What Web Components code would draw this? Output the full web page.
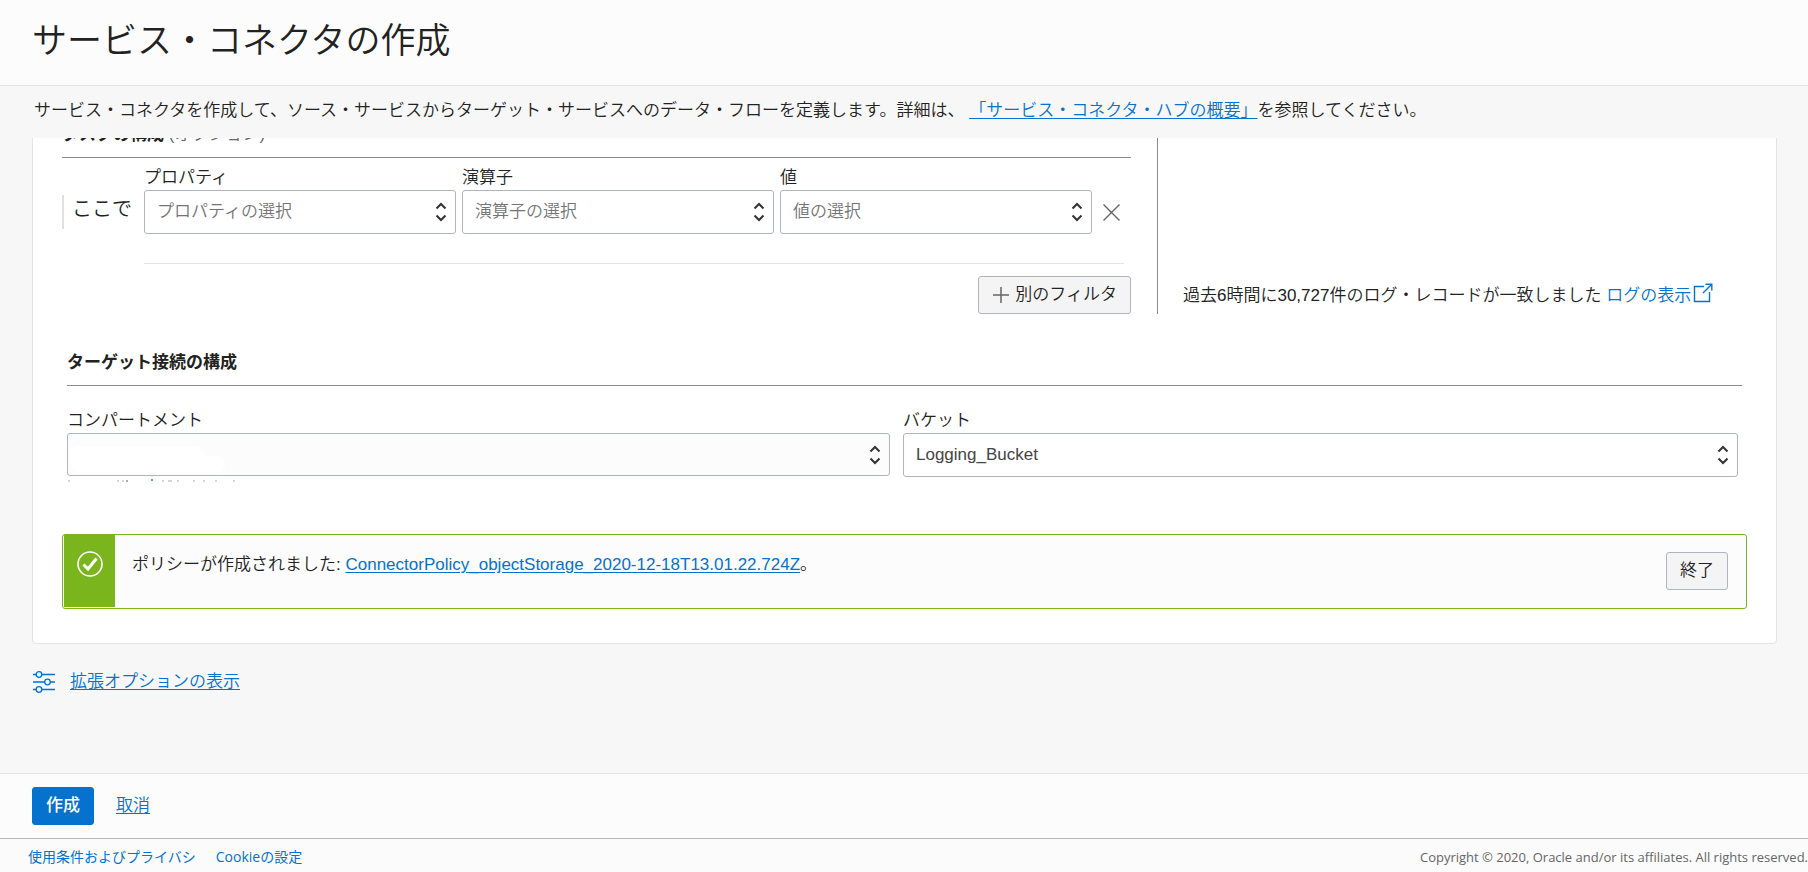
<!DOCTYPE html>
<html lang="ja">
<head>
<meta charset="utf-8">
<title>サービス・コネクタの作成</title>
<style>
  html, body { margin: 0; height: 100%; }
  body {
    --line: #e3e3e3;
    --line-dark: #8c8c8c;
    --field: #b0b4bd;
    --link: #0572ce;
    --green: #7ab51d;
    background: #f7f7f7;
    color: #222;
    font: 350 17px/24px "Liberation Sans", "Noto Sans CJK JP", sans-serif;
  }
</style>
</head>
<body>
<connector-page></connector-page>
<script>
const define = (name, html, setup) => {
  const template = document.createElement('template');
  template.innerHTML = html;
  customElements.define(name, class extends HTMLElement {
    constructor() {
      super();
      this.attachShadow({ mode: 'open' }).append(template.content.cloneNode(true));
    }
    connectedCallback() {
      if (setup) setup(this, this.shadowRoot);
    }
  });
};

define('text-link', `
  <style>
    :host { display: inline; }
    a { color: var(--link); text-decoration: underline; text-underline-offset: 2px; }
    :host([plain]) a { text-decoration: none; }
  </style>
  <a href="#"><slot></slot></a>`);

define('action-button', `
  <style>
    :host { display: block; flex: none; }
    button {
      box-sizing: border-box; height: 38px; padding: 0 13px;
      display: flex; align-items: center; gap: 5px;
      border: 1px solid var(--field); border-radius: 3px; background: #f4f4f4;
      color: inherit; font: inherit; white-space: nowrap;
    }
    :host([primary]) button { background: var(--link); border-color: var(--link); color: #fff; font-weight: 500; }
  </style>
  <button type="button"><slot></slot></button>`);

define('select-field', `
  <style>
    :host { display: block; min-width: 0; }
    label { display: block; padding-top: 1px; line-height: 25px; }
    .box { display: grid; align-items: center; }
    .box > * { grid-area: 1 / 1; }
    select {
      box-sizing: border-box; width: 100%; height: 44px; padding: 0 32px 0 12px;
      appearance: none; border: 1px solid var(--field); border-radius: 3px;
      background: #fff; color: #444; font: inherit;
    }
    :host([placeholder]) select { color: #757575; }
    :host([muted]) select { height: 43px; background: #fcfcfc; }
    svg { justify-self: end; margin-right: 9px; pointer-events: none; }
    slot { display: block; pointer-events: none; }
  </style>
  <label for="field"></label>
  <div class="box">
    <select id="field"><option></option></select>
    <slot></slot>
    <svg width="12" height="20" viewBox="0 0 12 20" fill="none" stroke="#333" stroke-width="2"><path d="M1.500 6.500 6 2l4.500 4.500M1.500 13.500 6 18l4.500-4.500"/></svg>
  </div>`, (host, root) => {
    root.querySelector('label').textContent = host.getAttribute('label');
    root.querySelector('option').textContent = host.getAttribute('value') || '';
  });

define('filter-row', `
  <style>
    :host { display: grid; grid-template-columns: 82px minmax(0, 1fr) 32px; }
    .where { align-self: end; margin-bottom: 5px; height: 34px; box-sizing: border-box; border-left: 2px solid #e0e0e0; padding-left: 8px; font-size: 20px; line-height: 28px; }
    .fields { display: grid; grid-template-columns: repeat(3, minmax(0, 1fr)); gap: 6px; }
    button { align-self: end; height: 44px; padding: 0; border: 0; background: none; display: flex; align-items: center; }
    hr { grid-column: 2 / 4; width: 100%; box-sizing: border-box; margin: 29px 0 0; border: 0; border-top: 1px solid var(--line); }
  </style>
  <div class="where">ここで</div>
  <div class="fields">
    <select-field placeholder label="プロパティ" value="プロパティの選択"></select-field>
    <select-field placeholder label="演算子" value="演算子の選択"></select-field>
    <select-field placeholder label="値" value="値の選択"></select-field>
  </div>
  <button type="button" aria-label="削除"><svg width="32" height="18" viewBox="0 0 32 18" stroke="#666" stroke-width="1.4"><path d="M11.500 1.500 27.500 17.500M27.500 1.500 11.500 17.500"/></svg></button>
  <hr>`);

define('task-section', `
  <style>
    :host { display: flex; }
    .filters { flex: 1; min-width: 0; padding-right: 26px; }
    h2 { margin: 0; font-size: 17px; line-height: 24px; padding: 0 0 10px; border-bottom: 1px solid var(--line-dark); }
    h2 span { font-weight: 350; color: #666; }
    filter-row { margin: 6px 7px 12px 0; }
    .add { display: flex; justify-content: flex-end; }
    aside { width: 590px; box-sizing: border-box; padding: 0 0 6px 25px; border-left: 1px solid var(--line-dark); display: flex; align-items: flex-end; white-space: nowrap; }
    aside svg { vertical-align: -2px; margin-left: 2px; }
  </style>
  <div class="filters">
    <h2>タスクの構成 <span>(オプション)</span></h2>
    <filter-row></filter-row>
    <div class="add"><action-button>
      <svg width="18" height="18" viewBox="0 0 18 18" stroke="#666" stroke-width="1.500"><path d="M9 1v16M1 9h16"/></svg>別のフィルタ
    </action-button></div>
  </div>
  <aside><div>過去6時間に30,727件のログ・レコードが一致しました <text-link plain>ログの表示<svg width="20" height="20" viewBox="0 0 20 20" fill="none" stroke="#0572ce" stroke-width="1.400"><path d="M11 3.500H1.500v15h15V9M10 10 18.500 1.500M12.500 1.200h6.300v6.300"/></svg></text-link></div></aside>`);

define('target-section', `
  <style>
    :host { display: block; }
    h2 { margin: 0 0 21px; font-size: 17px; line-height: 24px; padding: 1px 0 10px; border-bottom: 1px solid var(--line-dark); }
    .fields { display: grid; grid-template-columns: minmax(0, 823fr) minmax(0, 835fr); gap: 13px; padding-right: 4px; }
    .erased { display: block; position: relative; height: 43px; }
    .erased svg { position: absolute; left: 0; top: 0; overflow: visible; }
  </style>
  <h2>ターゲット接続の構成</h2>
  <div class="fields">
    <select-field muted label="コンパートメント"><span class="erased"><svg width="180" height="50">
      <path fill="#fff" d="M11 13h117q8 0 8 10h13q9 0 9 8.500t-9 8.500H14q-9 0-9-9Q3 28 3 21q0-8 8-8z"/>
      <path fill="#a9adb3" d="M1 47.500h2v1H1zM50 47.500h2v1h-2zM55 47.500h2v1h-2zM59 47h2v2h-2zM95 47.500h2v1h-2zM101 47.500h4v1h-4zM110 47.500h2v1h-2zM126 47.500h2v1h-2zM136 47.500h2v1h-2zM148 47.500h2v1h-2zM166 47.500h2v1h-2z"/>
      <path fill="#6f9fcf" d="M84 46h2v2h-2z"/>
    </svg></span></select-field>
    <select-field label="バケット" value="Logging_Bucket"></select-field>
  </div>`);

define('success-banner', `
  <style>
    :host { display: flex; box-sizing: border-box; height: 75px; padding: 0 18px 1px 1px; border: 1px solid var(--green); border-radius: 3px; background: #fcfcfc; }
    .mark { width: 51px; background: var(--green); padding-top: 16px; box-sizing: border-box; text-align: center; line-height: 0; }
    p { flex: 1; margin: 0; padding: 18px 17px 0; line-height: 24px; }
    action-button { align-self: center; }
  </style>
  <div class="mark"><svg width="26" height="26" viewBox="0 0 26 26" fill="none" stroke="#fff"><circle cx="13" cy="13" r="12" stroke-width="1.600"/><path d="M6.500 13.500 11 18l8.500-10.500" stroke-width="3"/></svg></div>
  <p><slot></slot></p>
  <action-button>終了</action-button>`);

define('connector-page', `
  <style>
    :host { display: flex; flex-direction: column; height: 100vh; overflow: hidden; }
    header { background: #fcfcfc; border-bottom: 1px solid var(--line); padding: 19px 32px 22px; }
    h1 { margin: 0; font-size: 35px; line-height: 44px; font-weight: 350; }
    .intro { margin: 0; padding: 13px 34px 15px; line-height: 24px; }
    main { flex: 1; min-height: 0; overflow: hidden; display: flex; flex-direction: column; justify-content: flex-end; padding: 0 31px 0 32px; }
    .panel { background: #fff; border: 1px solid var(--line); border-radius: 4px; padding: 24px 29px 34px; }
    target-section { margin: 36px 5px 57px; }
    .advanced { display: flex; align-items: center; gap: 14px; padding: 26px 0 79px; }
    .actions { display: flex; align-items: center; gap: 22px; padding: 13px 32px; background: #fcfcfc; border-top: 1px solid var(--line); }
    footer { display: flex; justify-content: space-between; background: #fbfbfb; border-top: 1px solid #b3b8c0; padding: 8px 0 5px 28px; font: 13px/20px "Open Sans", "Noto Sans CJK JP", sans-serif; color: #666; }
    nav { display: flex; gap: 20px; font-size: 14px; }
  </style>
  <header><h1>サービス・コネクタの作成</h1></header>
  <p class="intro">サービス・コネクタを作成して、ソース・サービスからターゲット・サービスへのデータ・フローを定義します。詳細は、<text-link>「サービス・コネクタ・ハブの概要」</text-link>を参照してください。</p>
  <main>
    <div class="panel">
      <task-section></task-section>
      <target-section></target-section>
      <success-banner>ポリシーが作成されました: <text-link>ConnectorPolicy_objectStorage_2020-12-18T13.01.22.724Z</text-link>。</success-banner>
    </div>
    <div class="advanced">
      <svg width="24" height="24" viewBox="0 0 24 24" fill="none" stroke="#0572ce" stroke-width="1.300"><path d="M1 4.500h3M10 4.500h13M1 12h11.500M18.500 12H23M1 19.500h3M10 19.500h13"/><circle cx="7" cy="4.500" r="2.800"/><circle cx="15.500" cy="12" r="2.800"/><circle cx="7" cy="19.500" r="2.800"/></svg>
      <text-link>拡張オプションの表示</text-link>
    </div>
  </main>
  <div class="actions"><action-button primary>作成</action-button><text-link>取消</text-link></div>
  <footer><nav><text-link plain>使用条件およびプライバシ</text-link><text-link plain>Cookieの設定</text-link></nav><span>Copyright © 2020, Oracle and/or its affiliates. All rights reserved.</span></footer>`);
</script>
</body>
</html>
